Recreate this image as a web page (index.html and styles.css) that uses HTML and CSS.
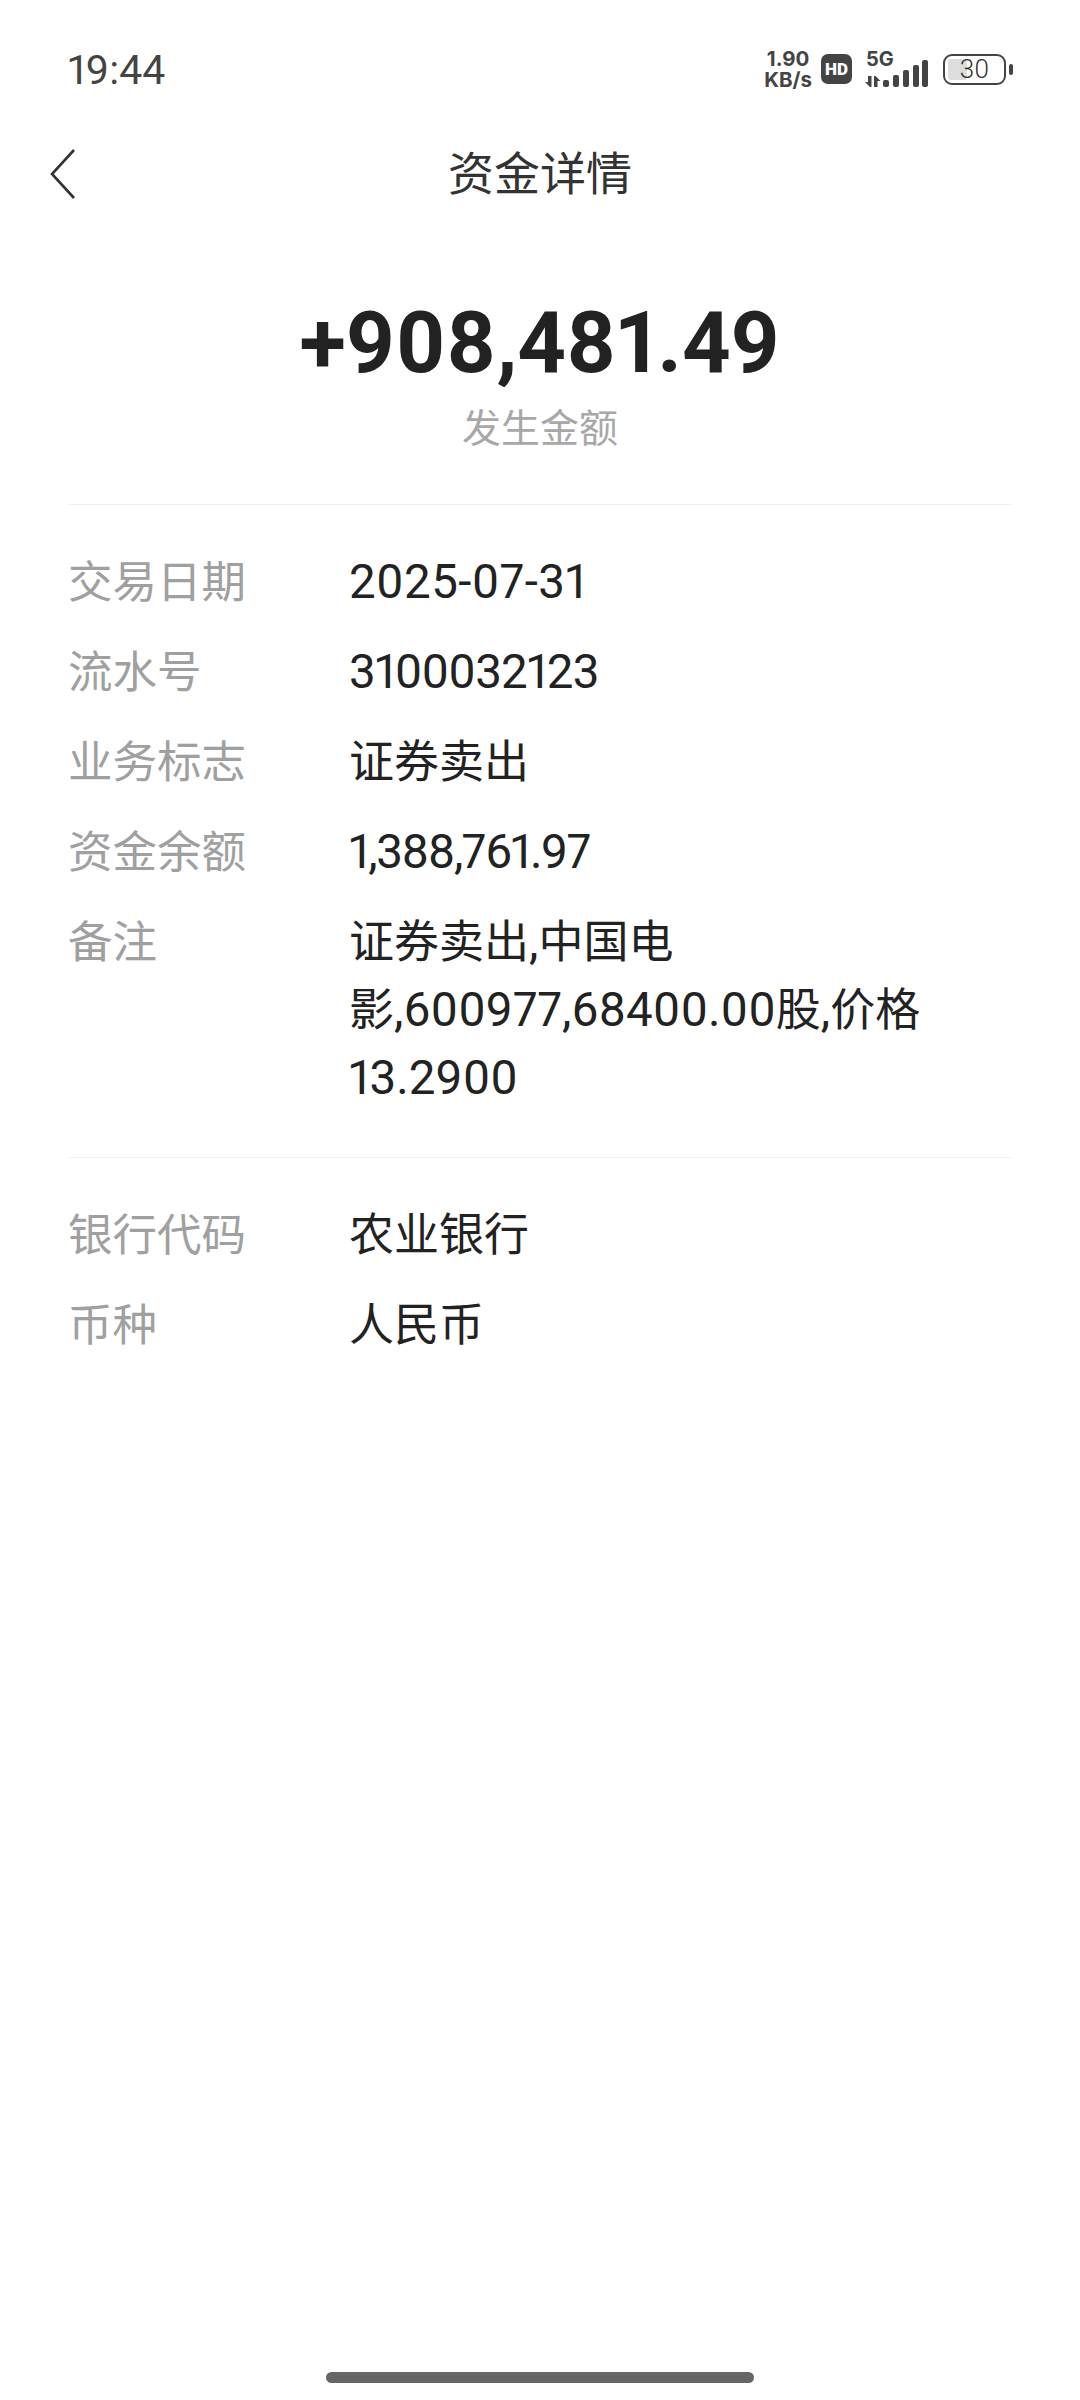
FILE: index.html
```html
<!DOCTYPE html>
<html lang="zh-CN">
<head>
  <meta charset="UTF-8" />
  <title>资金详情</title>
  <link rel="stylesheet" href="styles.css">
</head>
<body>
  <div class="page">
    <!-- status bar -->
    <div class="status-bar">
      <span class="time">19:44</span>
      <div class="status-icons">
        <div class="speed"><span>1.90</span><span>KB/s</span></div>
        <div class="hd">HD</div>
        <div class="net">
          <span class="net-label">5G</span>
          <svg class="signal" width="64" height="29" viewBox="0 0 64 29">
            <path d="M3 16h3.500v11h-1.500l-5-5h3zM9 16h1.500l5 5h-3v6h-3.500z" fill="#444"/>
            <rect x="18" y="20" width="6" height="7" rx="2" fill="#444"/>
            <rect x="28" y="15" width="6" height="12" rx="2" fill="#444"/>
            <rect x="38" y="10" width="6" height="17" rx="2" fill="#444"/>
            <rect x="48" y="5" width="6" height="22" rx="2" fill="#444"/>
            <rect x="57" y="0" width="6" height="27" rx="2" fill="#444"/>
          </svg>
        </div>
        <div class="battery">
          <div class="battery-body">
            <div class="battery-fill"></div>
            <span class="battery-num">30</span>
          </div>
          <div class="battery-cap"></div>
        </div>
      </div>
    </div>

    <div class="nav-bar">
      <svg class="back" width="30" height="54" viewBox="0 0 30 54">
        <path d="M26 3 L4 27 L26 51" fill="none" stroke="#333" stroke-width="2.600"/>
      </svg>
      <h1>资金详情</h1>
    </div>

    <div class="amount-box">
      <div class="amount">+908,481.49</div>
      <div class="amount-label">发生金额</div>
    </div>

    <div class="section">
      <div class="row"><span class="key">交易日期</span><span class="val"><span class="num wide">2025-07-31</span></span></div>
      <div class="row"><span class="key">流水号</span><span class="val"><span class="num tight">3100032123</span></span></div>
      <div class="row"><span class="key">业务标志</span><span class="val">证券卖出</span></div>
      <div class="row"><span class="key">资金余额</span><span class="val"><span class="num tighter">1,388,761.97</span></span></div>
      <div class="row"><span class="key">备注</span><span class="val">证券卖出<span class="num">,</span>中国电<br>影<span class="num">,600977,68400.00</span>股<span class="num">,</span>价格<br><span class="num">13.2900</span></span></div>
    </div>

    <div class="section section-last">
      <div class="row"><span class="key">银行代码</span><span class="val">农业银行</span></div>
      <div class="row"><span class="key">币种</span><span class="val">人民币</span></div>
    </div>

    <div class="home-bar"></div>
  </div>
</body>
</html>
```

FILE: styles.css
```css
* {
  box-sizing: border-box;
  margin: 0;
  padding: 0;
}

body {
  background: #fff;
  font-family: Roboto, "Noto Sans CJK SC", sans-serif;
  color: #222;
  font-variant-numeric: proportional-nums;
}

.page {
  position: relative;
  width: 1080px;
  height: 2400px;
  overflow: hidden;
}

.status-bar {
  height: 139px;
  padding: 45px 67px 0 68px;
  display: flex;
  justify-content: space-between;
  align-items: flex-start;
}

.time {
  font-size: 41px;
  line-height: 50px;
  font-weight: 400;
  color: #444;
}

.status-icons {
  display: flex;
  align-items: center;
  height: 50px;
  margin-top: -1px;
  color: #444;
}

.speed {
  display: flex;
  flex-direction: column;
  font-family: Inter, sans-serif;
  font-size: 20.500px;
  line-height: 21px;
  font-weight: 700;
  text-align: center;
  margin-right: 9px;
}

.hd {
  width: 31px;
  height: 30px;
  background: #444;
  color: #fff;
  border-radius: 7px;
  font-size: 17px;
  font-weight: 900;
  line-height: 30px;
  text-align: center;
  margin-right: 13px;
}

.net {
  position: relative;
  width: 64px;
  height: 36px;
  margin-right: 14px;
}

.net-label {
  position: absolute;
  top: -3px;
  left: 1px;
  font-family: Inter, sans-serif;
  font-size: 20px;
  line-height: 22px;
  font-weight: 700;
}

.signal {
  position: absolute;
  left: 0;
  bottom: -2px;
}

.battery {
  display: flex;
  align-items: center;
  gap: 3px;
}

.battery-body {
  position: relative;
  width: 63px;
  height: 31px;
  border: 2.500px solid #444;
  border-radius: 9px;
  padding: 3px;
}

.battery-fill {
  width: 19px;
  height: 100%;
  background: #ddd;
  border-radius: 3px;
}

.battery-num {
  position: absolute;
  inset: 0;
  text-align: center;
  font-size: 26px;
  line-height: 26px;
  font-weight: 300;
  color: #333;
}

.battery-cap {
  width: 4px;
  height: 11px;
  background: #444;
  border-radius: 2px;
}

.nav-bar {
  position: relative;
  height: 70px;
  text-align: center;
}

.back {
  position: absolute;
  left: 48px;
  top: 8px;
}

.nav-bar h1 {
  font-size: 46px;
  line-height: 70px;
  font-weight: 400;
  color: #333;
}

.amount-box {
  height: 296px;
  padding-top: 84px;
  border-bottom: 1px solid #efefef;
  margin: 0 68px;
  text-align: center;
}

.amount {
  font-size: 85px;
  line-height: 100px;
  font-weight: 700;
  color: #222;
}

.amount-label {
  font-size: 39px;
  line-height: 50px;
  margin-top: 11px;
  color: #a8a8a8;
}

.section {
  margin: 0 68px;
  padding: 33px 0;
  border-bottom: 1px solid #efefef;
}

.section-last {
  border-bottom: 0;
}

.row {
  display: grid;
  grid-template-columns: 281px 1fr;
  padding: 11px 0;
  font-size: 45px;
  line-height: 68px;
}

.key {
  font-size: 44.500px;
  color: #a0a0a0;
}

.val {
  color: #222;
}

.num {
  font-size: 47.500px;
  line-height: 1;
}

.wide {
  letter-spacing: 0.400px;
}

.tight {
  letter-spacing: -0.800px;
}

.tighter {
  letter-spacing: -1.400px;
}

.home-bar {
  position: absolute;
  left: 326px;
  bottom: 17px;
  width: 428px;
  height: 11px;
  border-radius: 6px;
  background: #666;
}
```
